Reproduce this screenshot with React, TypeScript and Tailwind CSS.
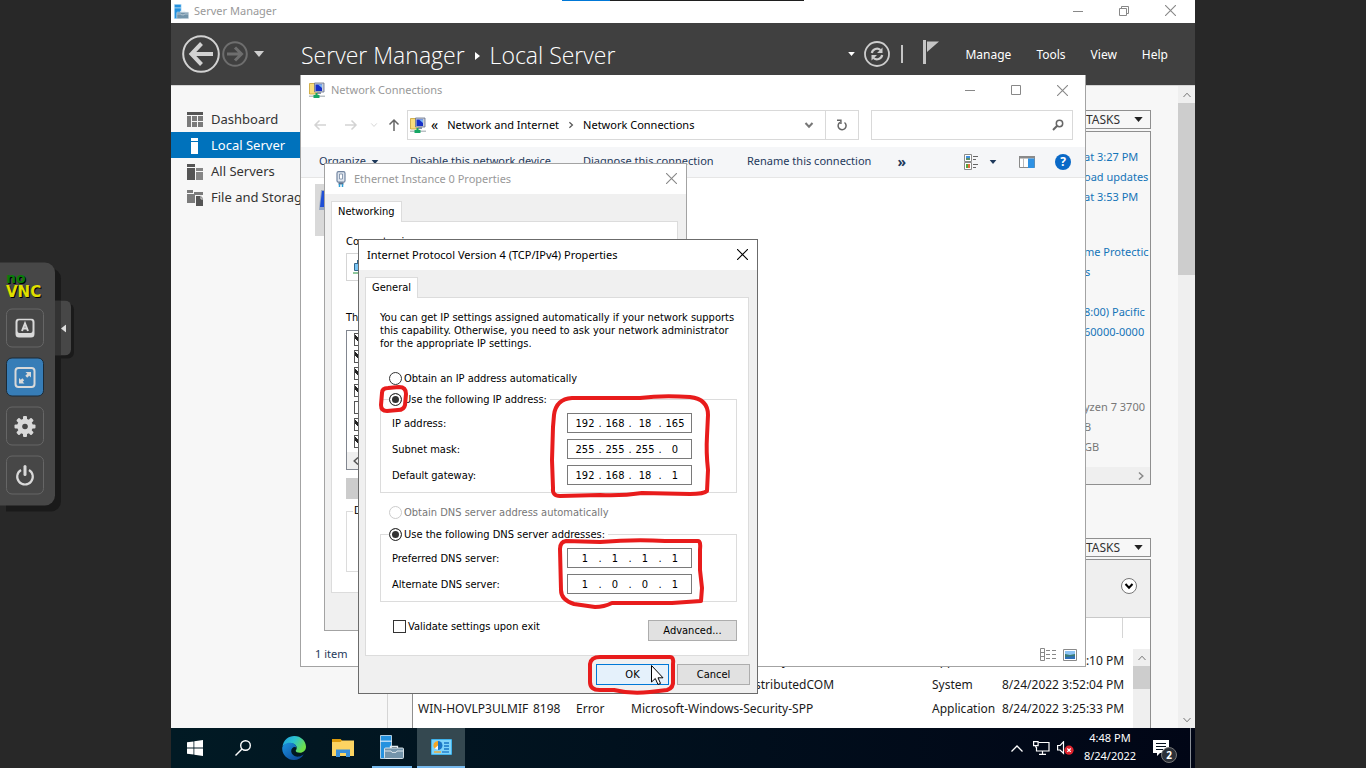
import type { ReactNode } from "react";

const segoe = "font-['Noto_Sans','Open_Sans',sans-serif]";
const tahoma = "font-['DejaVu_Sans_Condensed','DejaVu_Sans',sans-serif]";

/* ---------- small drawings ---------- */

function CaretDown({ className }: { className: string }) {
  return (
    <svg viewBox="0 0 10 6" className={className} aria-hidden="true">
      <path d="M0 0h10L5 6z" fill="currentColor" />
    </svg>
  );
}

function Chevron({ d, className }: { d: string; className: string }) {
  return (
    <svg viewBox="0 0 10 10" className={className} fill="none" stroke="currentColor" aria-hidden="true">
      <path d={d} />
    </svg>
  );
}

const UP = "M1.5 7L5 3.2L8.5 7";
const DOWN = "M1.5 3L5 6.8L8.5 3";
const LEFT = "M7 1.5L3.2 5L7 8.5";
const RIGHT = "M3 1.5L6.8 5L3 8.5";

function CloseIcon() {
  return (
    <svg viewBox="0 0 10 10" className="size-[11px]" stroke="currentColor" fill="none" aria-hidden="true">
      <path d="M0 0l10 10M10 0L0 10" />
    </svg>
  );
}

function MinimizeIcon() {
  return (
    <svg viewBox="0 0 10 10" className="size-[10px]" stroke="currentColor" fill="none" aria-hidden="true">
      <path d="M0 5.5h10" />
    </svg>
  );
}

function MaximizeIcon() {
  return (
    <svg viewBox="0 0 10 10" className="size-[10px]" stroke="currentColor" fill="none" aria-hidden="true">
      <path d="M.5.5h9v9h-9z" />
    </svg>
  );
}

function RestoreIcon() {
  return (
    <svg viewBox="0 0 10 10" className="size-[10px]" stroke="currentColor" fill="none" aria-hidden="true">
      <path d="M.5 2.5h7v7h-7zM2.5 2.5v-2h7v7h-2" />
    </svg>
  );
}

function ToolboxServer({ className }: { className: string }) {
  return (
    <svg viewBox="0 0 24 24" className={className} aria-hidden="true">
      <path d="M.5.5h11v23H.5z" fill="#2492df" stroke="#d7ecfa" strokeWidth=".8" />
      <path d="M0 6.2h12" stroke="#d7ecfa" strokeWidth="1.2" />
      <path d="M10.5 13.5v-2h7v2" fill="none" stroke="#e4edf2" strokeWidth="1.3" />
      <rect x="4.5" y="13" width="19" height="10.5" rx="1" fill="#7394aa" stroke="#e4edf2" strokeWidth=".9" />
      <path d="M5 16h6l1 1.4h4l1-1.4h6" fill="none" stroke="#e4edf2" strokeWidth=".9" />
    </svg>
  );
}

function NetworkFolder() {
  return (
    <svg viewBox="0 0 16 16" className="size-4 shrink-0" aria-hidden="true">
      <path d="M.5 1.5h5l1 1h3v9.500h-9z" fill="#f9dc7c" stroke="#c7a02f" strokeWidth=".8" />
      <path d="M5.500 1h9.500v9H5.500z" fill="#c9ced9" stroke="#667089" strokeWidth=".8" />
      <path d="M6.500 2.500h6.500v6.500H6.500z" fill="#1730c8" />
      <path d="M9 2.500h4v3.500z" fill="#7cb6f5" />
      <path d="M8 10h4v2H8z" fill="#8b93a5" />
      <path d="M0 13.500h16v1.500H0z" fill="#b9c0c4" />
      <path d="M4.500 13h6v3h-6z" fill="#16a765" />
      <path d="M6.500 11h2v3h-2z" fill="#16a765" />
    </svg>
  );
}

function DashboardIcon() {
  return (
    <svg viewBox="0 0 16 16" className="size-4" aria-hidden="true">
      <path d="M0 0h16v3H0z" fill="#555" />
      <path d="M0 4h4v11H0zM5 4h5v5H5zM11 4h5v5h-5zM5 10h5v5H5zM11 10h5v5h-5z" fill="#7b7b7b" />
    </svg>
  );
}

function LocalServerIcon() {
  return (
    <svg viewBox="0 0 16 16" className="size-4" aria-hidden="true">
      <path d="M4 0h7v3H4zM4 4h7v12H4z" fill="#fff" />
    </svg>
  );
}

function AllServersIcon() {
  return (
    <svg viewBox="0 0 16 16" className="size-4" aria-hidden="true">
      <path d="M0 0h8v3H0zM0 4h8v12H0z" fill="#555" />
      <path d="M9 4h7v3H9zM9 8h7v8H9z" fill="#868686" />
    </svg>
  );
}

function FileStorageIcon() {
  return (
    <svg viewBox="0 0 16 16" className="size-4" aria-hidden="true">
      <path d="M0 0h6v3H0zM0 4h8v9H0zM7 2h9v3H7z" fill="#7b7b7b" />
      <path d="M9 6h5l2 2.500V16H9z" fill="#555" />
      <path d="M14 5v4h2" fill="none" stroke="#ddd" />
    </svg>
  );
}

/* ---------- shared pieces ---------- */

function CaptionButton({ label, children }: { label: string; children: ReactNode }) {
  return (
    <button type="button" aria-label={label} className="flex w-[46px] items-center justify-center self-stretch">
      {children}
    </button>
  );
}

function MenuButton({ children }: { children: ReactNode }) {
  return (
    <button type="button" className="whitespace-nowrap">
      {children}
    </button>
  );
}

/* ---------- noVNC control bar ---------- */

function VncButton({ label, active, children }: { label: string; active?: boolean; children: ReactNode }) {
  const tone = active ? "border-[#1b2b38] bg-[#377db7]" : "border-[#666] bg-[#474747]";
  return (
    <button
      type="button"
      aria-label={label}
      className={`flex h-[39px] w-[38px] items-center justify-center rounded-md border text-[#d9d9d9] ${tone}`}
    >
      {children}
    </button>
  );
}

function VncBar() {
  return (
    <aside className="absolute top-1/2 left-0 z-10 flex -translate-y-1/2 items-start">
      <div className="flex flex-col gap-[10px] rounded-r-[10px] bg-[#474747] pt-2 pr-[11px] pb-[11px] pl-1.5 shadow-[6px_6px_0_#1a1a1a]">
        <div className="flex h-7 flex-col font-['DejaVu_Sans',sans-serif] font-bold [text-shadow:1px_1px_0_#000]">
          <span className="text-sm leading-[14px] text-[#0a7a0a]">no</span>
          <span className="text-[15px] leading-[14px] text-[#e0e000]">VNC</span>
        </div>
        <VncButton label="Show extra keys">
          <svg viewBox="0 0 20 20" className="size-5" aria-hidden="true">
            <path
              fillRule="evenodd"
              d="M4 0h12a3.500 3.500 0 0 1 3.500 3.500v12A3.500 3.500 0 0 1 16 19H4A3.500 3.500 0 0 1 .5 15.500v-12A3.500 3.500 0 0 1 4 0zm.5 1.800A2 2 0 0 0 2.500 4v8.500a2 2 0 0 0 2 2h11a2 2 0 0 0 2-2V4a2 2 0 0 0-2-2.200z"
              fill="currentColor"
            />
            <path d="M7 12.500l3-7.500l3 7.500M8 10h4" fill="none" stroke="currentColor" strokeWidth="2" />
          </svg>
        </VncButton>
        <VncButton label="Full screen" active>
          <svg viewBox="0 0 22 22" className="size-[22px]" aria-hidden="true">
            <rect x="1.500" y="1.500" width="19" height="19" rx="3" fill="none" stroke="currentColor" strokeWidth="2" />
            <path d="M11.500 5.500H17V11l-1.800-1.800l-2 2l-1.900-1.900l2-2zM10.500 17H5v-5.500l1.800 1.800l1.500-1.500l1.900 1.900l-1.500 1.500z" fill="currentColor" />
          </svg>
        </VncButton>
        <VncButton label="Settings">
          <svg viewBox="-11 -11 22 22" className="size-[22px]" aria-hidden="true">
            <g fill="currentColor">
              {[0, 45, 90, 135].map((a) => (
                <rect key={a} x="-2" y="-10.500" width="4" height="21" rx="1" transform={`rotate(${a})`} />
              ))}
              <circle r="7.800" />
            </g>
            <circle r="2.800" fill="#474747" />
          </svg>
        </VncButton>
        <VncButton label="Disconnect">
          <svg viewBox="0 0 22 22" className="size-[22px]" fill="none" stroke="currentColor" aria-hidden="true">
            <path d="M7 5.500a7.800 7.800 0 1 0 8 0" strokeWidth="2.200" />
            <path d="M11 2v8" strokeWidth="3" strokeLinecap="round" />
          </svg>
        </VncButton>
      </div>
      <button
        type="button"
        aria-label="Hide control bar"
        className="mt-[38px] flex h-[55px] w-4 items-center justify-center rounded-r-md bg-[#474747] shadow-[3px_3px_0_#1a1a1a] [background-image:linear-gradient(90deg,#333_0_6px,transparent_6px)]"
      >
        <svg viewBox="0 0 5 8" className="h-2 w-[5px]" aria-hidden="true">
          <path d="M5 0v8L0 4z" fill="#ddd" />
        </svg>
      </button>
    </aside>
  );
}

/* ---------- Server Manager ---------- */

const NAV: { label: string; icon: ReactNode; selected?: boolean }[] = [
  { label: "Dashboard", icon: <DashboardIcon /> },
  { label: "Local Server", icon: <LocalServerIcon />, selected: true },
  { label: "All Servers", icon: <AllServersIcon /> },
  { label: "File and Storage Services", icon: <FileStorageIcon /> },
];

const EVENTS = [
  ["", "", "", "Microsoft-Windows-Security-SPP", "Application", "8/24/2022 3:52:10 PM"],
  ["", "", "", "Microsoft-Windows-DistributedCOM", "System", "8/24/2022 3:52:04 PM"],
  ["WIN-HOVLP3ULMIF", "8198", "Error", "Microsoft-Windows-Security-SPP", "Application", "8/24/2022 3:25:33 PM"],
];

function TasksButton() {
  return (
    <button
      type="button"
      className="flex h-[19px] w-20 items-center justify-between self-end border border-[#8f8f8f] pr-[7px] pl-3.5 text-xs text-[#333]"
    >
      TASKS
      <CaretDown className="h-[5px] w-[9px] text-[#222]" />
    </button>
  );
}

function PropertiesTile() {
  return (
    <section className="flex h-[354px] flex-col items-end overflow-hidden border border-[#8f8f8f]">
      <div className="flex w-[66px] flex-1 flex-col pt-[15px] text-[11px] leading-5 whitespace-nowrap text-[#1474b8]">
        <a href="#installed">at 3:27 PM</a>
        <a href="#updates">oad updates</a>
        <a href="#checked">at 3:53 PM</a>
        <a href="#protection" className="mt-[35px]">
          me Protectic
        </a>
        <a href="#settings" className="pl-px">s</a>
        <a href="#zone" className="mt-5">
          8:00) Pacific
        </a>
        <a href="#product">60000-0000</a>
        <p className="mt-[55px] text-[#777]">yzen 7 3700</p>
        <p className="text-[#777]">B</p>
        <p className="text-[#777]">GB</p>
      </div>
      <div className="flex h-[17px] items-center justify-end self-stretch bg-[#efefef] pr-1">
        <Chevron d={RIGHT} className="size-[10px] text-[#888] [stroke-width:1.5]" />
      </div>
    </section>
  );
}

function EventsTile() {
  return (
    <section className="flex flex-1 flex-col border border-b-0 border-[#8f8f8f] bg-white">
      <div className="flex h-[58px] items-center justify-end border-b border-[#c9c9c9] bg-[#efefef] pr-[13px] pb-[5px]">
        <button
          type="button"
          aria-label="Expand filter"
          className="flex size-4 items-center justify-center rounded-full border border-[#777] bg-white"
        >
          <Chevron d={DOWN} className="size-[10px] text-black [stroke-width:2]" />
        </button>
      </div>
      <div className="flex h-[31px] justify-end pr-[27px]">
        <span className="h-5 border-l border-[#d5d5d5]" />
      </div>
      <div className="flex flex-1 overflow-hidden">
        <table className="w-full flex-1 table-fixed self-start text-left text-xs whitespace-nowrap text-[#1a1a1a]">
          <colgroup>
            <col className="w-[120px]" />
            <col className="w-[43px]" />
            <col className="w-[55px]" />
            <col />
            <col className="w-[70px]" />
            <col className="w-[131px]" />
          </colgroup>
          <tbody>
            {EVENTS.map((row, i) => (
              <tr key={i} className="h-6">
                {row.map((cell, j) => (
                  <td key={j} className="p-0 first:pl-[5px]">
                    {cell}
                  </td>
                ))}
              </tr>
            ))}
          </tbody>
        </table>
        <div className="flex w-[17px] flex-col items-center bg-[#efefef]">
          <div className="flex h-[17px] items-center">
            <Chevron d={UP} className="size-[10px] text-[#777]" />
          </div>
          <div className="h-[23px] w-full bg-[#cdcdcd]" />
        </div>
      </div>
    </section>
  );
}

function ServerManager() {
  return (
    <div className="flex min-h-0 flex-1 flex-col bg-white">
      <div className="flex h-[23px] shrink-0 items-center text-[#888]">
        <ToolboxServer className="ml-[3px] size-[15px]" />
        <h1 className="ml-[5px] flex-1 text-[11px] text-[#999]">Server Manager</h1>
        <div className="flex self-stretch pr-0.5 pb-0.5">
          <CaptionButton label="Minimize">
            <MinimizeIcon />
          </CaptionButton>
          <CaptionButton label="Restore">
            <RestoreIcon />
          </CaptionButton>
          <CaptionButton label="Close">
            <CloseIcon />
          </CaptionButton>
        </div>
      </div>

      <header className="flex h-[62px] shrink-0 items-center bg-[#404040] text-white">
        <button type="button" aria-label="Back" className="ml-[11px]">
          <svg viewBox="0 0 38 38" className="size-[38px]" fill="none" stroke="#d2d2d2" aria-hidden="true">
            <circle cx="19" cy="19" r="17.800" strokeWidth="2" />
            <path d="M31 19H9" strokeWidth="4" />
            <path d="M19.500 8.500L9.500 19l10 10.500" strokeWidth="4" />
          </svg>
        </button>
        <button type="button" aria-label="Forward" className="ml-0.5">
          <svg viewBox="0 0 26 26" className="size-[26px]" fill="none" stroke="#6e6e6e" aria-hidden="true">
            <circle cx="13" cy="13" r="11.800" strokeWidth="2" />
            <path d="M5 13h14M13 6.500l6.500 6.500l-6.500 6.500" strokeWidth="3" />
          </svg>
        </button>
        <CaretDown className="ml-1.5 h-1.5 w-[10px] text-[#cfcfcf]" />
        <nav className="ml-[37px] flex flex-1 items-center pt-[3px] font-['Open_Sans',sans-serif] text-[23px] font-light whitespace-nowrap">
          <span>Server Manager</span>
          <svg viewBox="0 0 5 8" className="mx-2.5 h-2 w-[5px]" aria-hidden="true">
            <path d="M0 0v8l5-4z" fill="#fff" />
          </svg>
          <span>Local Server</span>
        </nav>
        <CaretDown className="h-1 w-[7px] text-white" />
        <button type="button" aria-label="Refresh" className="ml-[9px]">
          <svg viewBox="0 0 26 26" className="size-[26px]" fill="none" stroke="#cdcdcd" aria-hidden="true">
            <circle cx="13" cy="13" r="12" strokeWidth="1.800" />
            <path d="M7.800 12A5.400 5.400 0 0 1 16.500 9M18.200 14A5.400 5.400 0 0 1 9.500 17" strokeWidth="2.200" />
            <path d="M18.500 6.500v5.500H13zM7.500 19.500V14H13z" fill="#cdcdcd" stroke="none" />
          </svg>
        </button>
        <span className="ml-[11px] h-[18px] border-l-2 border-[#c5c5c5]" />
        <button type="button" aria-label="Notifications" className="ml-5 pb-1">
          <svg viewBox="0 0 16 24" className="h-6 w-4" aria-hidden="true">
            <path d="M0 0h3v24H0z" fill="#c5c5c5" />
            <path d="M4 1.500h12L4 12z" fill="#c5c5c5" />
          </svg>
        </button>
        <nav className="ml-[26px] flex gap-[25px] pt-0.5 pr-[27px] text-xs">
          <MenuButton>Manage</MenuButton>
          <MenuButton>Tools</MenuButton>
          <MenuButton>View</MenuButton>
          <MenuButton>Help</MenuButton>
        </nav>
      </header>

      <div className="flex min-h-0 flex-1 border-t border-[#d5d5d5] bg-[#f7f7f7]">
        <nav className="w-[217px] shrink-0 border-r border-[#d5d5d5] pt-5 text-[13px] text-[#333]">
          {NAV.map((item) => (
            <a
              key={item.label}
              href="#nav"
              className={`flex h-[26px] items-center gap-2 pt-0.5 pl-4 whitespace-nowrap ${
                item.selected ? "bg-[#0072bc] text-white" : ""
              }`}
            >
              {item.icon}
              {item.label}
            </a>
          ))}
        </nav>
        <main className="flex min-w-0 flex-1 flex-col overflow-hidden pt-6 pr-[27px] pl-6">
          <TasksButton />
          <div className="mt-[2px] flex flex-col">
            <PropertiesTile />
          </div>
          <div className="mt-[53px] flex min-h-0 flex-1 flex-col gap-0.5">
            <TasksButton />
            <EventsTile />
          </div>
        </main>
        <div className="flex w-[17px] shrink-0 flex-col items-center bg-[#efefef]">
          <div className="flex h-[17px] items-center">
            <Chevron d={UP} className="size-[10px] text-[#777]" />
          </div>
          <div className="h-[172px] w-full bg-[#cdcdcd]" />
          <div className="flex flex-1 items-end pb-[3px]">
            <Chevron d={DOWN} className="size-[10px] text-[#777]" />
          </div>
        </div>
      </div>
    </div>
  );
}

/* ---------- Network Connections window ---------- */

function NavArrow({ label, d, className }: { label: string; d: string; className: string }) {
  return (
    <button type="button" aria-label={label} className={className}>
      <svg viewBox="0 0 14 14" className="size-3.5" fill="none" stroke="currentColor" strokeWidth="1.500" aria-hidden="true">
        <path d={d} />
      </svg>
    </button>
  );
}

function NetworkConnections() {
  return (
    <section
      aria-label="Network Connections"
      className="absolute top-[75px] left-[129px] flex h-[592px] w-[786px] flex-col border border-t-0 border-[#a3a3a3] bg-white"
    >
      <div className="flex h-[30px] items-center text-[#888]">
        <span className="ml-2">
          <NetworkFolder />
        </span>
        <h2 className="ml-1.5 flex-1 text-[11px] text-[#999]">Network Connections</h2>
        <CaptionButton label="Minimize">
          <MinimizeIcon />
        </CaptionButton>
        <CaptionButton label="Maximize">
          <MaximizeIcon />
        </CaptionButton>
        <CaptionButton label="Close">
          <CloseIcon />
        </CaptionButton>
      </div>

      <div className="flex h-[42px] items-center pb-0.5 text-[11px] text-black">
        <NavArrow label="Back" d="M13 7H2M6.500 2.500L2 7l4.500 4.500" className="ml-3 text-[#d3d3d3]" />
        <NavArrow label="Forward" d="M1 7h11M7.500 2.500L12 7l-4.500 4.500" className="ml-[17px] text-[#d3d3d3]" />
        <Chevron d={DOWN} className="ml-3 size-2 text-[#ccc]" />
        <NavArrow label="Up" d="M7 13V2M2.500 6.500L7 2l4.500 4.500" className="ml-[9px] text-[#666] [stroke-width:2]" />
        <div className="ml-1.5 flex h-[30px] w-[452px] items-center border border-[#d9d9d9] whitespace-nowrap">
          <span className="ml-0.5">
            <NetworkFolder />
          </span>
          <span className="ml-[5px] text-sm leading-4">«</span>
          <button type="button" className="ml-[9px]">Network and Internet</button>
          <Chevron d={RIGHT} className="mx-2 size-2 text-[#555] [stroke-width:1.5]" />
          <button type="button">Network Connections</button>
          <button type="button" aria-label="Recent locations" className="ml-auto px-[11px]">
            <Chevron d={DOWN} className="size-[10px] text-[#777] [stroke-width:2]" />
          </button>
          <button
            type="button"
            aria-label="Refresh"
            className="flex w-[33px] items-center justify-center self-stretch border-l border-[#d9d9d9]"
          >
            <svg viewBox="0 0 12 12" className="size-3" fill="none" stroke="#666" strokeWidth="1.500" aria-hidden="true">
              <path d="M8.500 3.500A4 4 0 1 1 4 3.300" />
              <path d="M1 1.200H4.900V5" />
            </svg>
          </button>
        </div>
        <div className="ml-3 flex h-[30px] w-[202px] items-center border border-[#d9d9d9] pr-2">
          <input aria-label="Search Network Connections" className="min-w-0 flex-1 outline-none" />
          <svg viewBox="0 0 12 12" className="size-3" fill="none" stroke="#666" aria-hidden="true">
            <circle cx="7.500" cy="4.500" r="3.200" strokeWidth="1.500" />
            <path d="M5.200 6.800L1 11" strokeWidth="2" />
          </svg>
        </div>
      </div>

      <div className="flex h-[31px] items-center border-b border-[#e6e6e6] bg-[#f5f6f8] pb-px pl-[18px] text-[11px] text-[#1e395b]">
        <div className="w-[91px]">
          <button type="button" className="flex items-center gap-[5px]">
            Organize
            <CaretDown className="h-1 w-[8px]" />
          </button>
        </div>
        <div className="w-[173px]">
          <MenuButton>Disable this network device</MenuButton>
        </div>
        <div className="w-[164px]">
          <MenuButton>Diagnose this connection</MenuButton>
        </div>
        <div className="flex flex-1 items-center">
          <MenuButton>Rename this connection</MenuButton>
          <button type="button" aria-label="More commands" className="ml-[26px] text-sm leading-4 font-bold">
            »
          </button>
        </div>
        <button type="button" aria-label="Change view" className="flex items-center gap-2.5">
          <svg viewBox="0 0 15 16" className="h-4 w-[15px]" fill="none" stroke="#8a8a8a" aria-hidden="true">
            <path d="M.5.5h7v7h-7zM.5 8.500h7v7h-7z" fill="#fff" />
            <path d="M2 2h4v2H2z" fill="#3f8ede" stroke="none" />
            <path d="M2 4h4v2H2z" fill="#5b8f6a" stroke="none" />
            <path d="M2 10h2v4H2z" fill="#55a63a" stroke="none" />
            <path d="M4 10h2v4H4z" fill="#e36d3c" stroke="none" />
            <path d="M9 2.500h5M9 5.500h3M9 10.500h5M9 13.500h3" stroke="#666" />
          </svg>
          <CaretDown className="h-1 w-[8px]" />
        </button>
        <button type="button" aria-label="Preview pane" className="ml-[22px]">
          <svg viewBox="0 0 16 12" className="h-3 w-4" aria-hidden="true">
            <path d="M.5.5h15v11H.5z" fill="#fff" stroke="#8a8a8a" />
            <path d="M0 0h16v2.500H0z" fill="#8a8a8a" />
            <path d="M4.500 2v9" stroke="#bbb" />
            <path d="M9 2.500h6.500V12H9z" fill="#2f92e4" />
          </svg>
        </button>
        <button
          type="button"
          aria-label="Help"
          className="mr-[14px] ml-5 flex size-4 items-center justify-center rounded-full bg-[#0a69c7] text-xs leading-none font-bold text-white"
        >
          ?
        </button>
      </div>

      <div className="flex-1 pt-1.5 pl-[14px]">
        <div className="h-[52px] w-[240px] bg-[#d9d9d9] pt-1.5 pl-1">
          <svg viewBox="0 0 30 20" className="h-5 w-[30px]" aria-hidden="true">
            <path d="M2 0h28v20H0z" fill="#98a8c4" />
            <path d="M3 1h26v16H1z" fill="#1f4fd6" />
          </svg>
        </div>
      </div>

      <div className="flex h-[23px] items-center pr-2 pl-[14px] text-[11px] text-[#1e395b]">
        <span className="flex-1">1 item</span>
        <button type="button" aria-label="Details view">
          <svg viewBox="0 0 16 13" className="h-[13px] w-4" fill="none" stroke="#888" aria-hidden="true">
            <path d="M.5.5h4v12h-4zM.5 4.500h4M.5 8.500h4M6 2.500h4M12 2.500h4M6 6.500h4M12 6.500h4M6 10.500h4M12 10.500h4" />
          </svg>
        </button>
        <button type="button" aria-label="Large icons view" className="ml-[7px]">
          <svg viewBox="0 0 14 12" className="h-3 w-3.5" aria-hidden="true">
            <path d="M.5.5h13v11H.5z" fill="#fff" stroke="#8a8a8a" />
            <path d="M2 2h10v4H2z" fill="#8cc3f4" />
            <path d="M2 5l5 1l5-1v5H2z" fill="#3c7c73" />
            <path d="M2 8l10-1v3H2z" fill="#2d6fb8" />
          </svg>
        </button>
      </div>
    </section>
  );
}

/* ---------- Ethernet properties window ---------- */

function EthernetProperties() {
  const items = [true, true, true, true, false, true, true];
  return (
    <section
      aria-label="Ethernet Instance 0 Properties"
      className="absolute top-[163px] left-[153px] flex h-[468px] w-[363px] flex-col border border-[#a3a3a3] bg-[#f0f0f0]"
    >
      <div className="flex h-[30px] items-center bg-white text-[#888]">
        <svg viewBox="0 0 10 16" className="ml-[11px] h-4 w-[10px]" aria-hidden="true">
          <rect x="1" y=".7" width="8" height="10.500" rx="1.500" fill="#dfe6ef" stroke="#7285a0" strokeWidth="1.200" />
          <path d="M3.500 3h3v5h-3z" fill="#fff" stroke="#7285a0" strokeWidth=".8" />
          <path d="M2.500 11.500h5v2h-5z" fill="#5c708c" />
          <path d="M3.500 13v3M6.500 13v3" stroke="#2c9fd8" strokeWidth="1.500" />
        </svg>
        <h2 className="ml-2 flex-1 text-[11px] text-[#999]">Ethernet Instance 0 Properties</h2>
        <button type="button" aria-label="Close" className="flex w-[30px] items-center justify-center self-stretch pb-0.5">
          <CloseIcon />
        </button>
      </div>
      <div className={`flex flex-col px-1.5 pt-[7px] pr-2 text-[11px] text-black ${tahoma}`}>
        <button type="button" className="z-10 -mb-px h-[21px] self-start border border-b-0 border-[#dcdcdc] bg-white px-1.5">
          Networking
        </button>
        <div className="flex h-[372px] flex-col border border-[#dcdcdc] bg-white px-3.5 pt-3">
          <p className="leading-4">Connect using:</p>
          <div className="mt-[3px] flex h-7 items-center border border-[#d5d5d5] pl-1.5">
            <svg viewBox="0 0 16 16" className="size-4" aria-hidden="true">
              <path d="M1.500 4.500h12v7h-12z" fill="#79c5f5" stroke="#35688c" />
              <path d="M4 1h8v4H4z" fill="#35688c" />
              <path d="M0 13h16v2H0z" fill="#8fc79b" />
            </svg>
          </div>
          <p className="mt-[29px] leading-4">This connection uses the following items:</p>
          <div className="mt-1 flex h-[140px] shrink-0 flex-col border border-[#828790]">
            <ul className="flex-1 pl-[7px]">
              {items.map((on, i) => (
                <li key={i} className="flex h-[17px] items-center">
                  <input
                    type="checkbox"
                    defaultChecked={on}
                    aria-label={`Item ${i + 1}`}
                    className="size-[13px] appearance-none border border-[#555] bg-white checked:bg-[linear-gradient(45deg,transparent_30%,#222_30%_48%,transparent_48%)]"
                  />
                </li>
              ))}
            </ul>
            <div className="flex h-[17px] items-center bg-[#efefef] pl-1">
              <Chevron d={LEFT} className="size-[10px] text-[#555] [stroke-width:1.5]" />
            </div>
          </div>
          <button type="button" disabled aria-label="Install" className="mt-2 h-[21px] w-[94px] shrink-0 bg-[#ccc]" />
          <fieldset className="mt-[4px] h-[69px] shrink-0 border border-[#dcdcdc]">
            <legend className="ml-1.5 px-px leading-4">Description</legend>
          </fieldset>
        </div>
      </div>
    </section>
  );
}

/* ---------- IPv4 properties dialog ---------- */

const radioClass =
  "size-[13px] shrink-0 appearance-none rounded-full border border-[#333] bg-white checked:bg-[#333] checked:shadow-[inset_0_0_0_2px_white] disabled:border-[#ccc]";

function Radio({ name, label, checked, disabled }: { name: string; label: string; checked?: boolean; disabled?: boolean }) {
  return (
    <label className={`flex h-4 items-center gap-0.5 whitespace-nowrap ${disabled ? "text-[#777]" : ""}`}>
      <input type="radio" name={name} defaultChecked={checked} disabled={disabled} className={radioClass} />
      {label}
    </label>
  );
}

function AddressRow({ label, octets }: { label: string; octets: string[] }) {
  return (
    <div role="group" aria-label={label} className="flex h-5 items-center justify-between">
      <span>{label}</span>
      <div className="flex h-5 w-[125px] items-center border border-[#7a7a7a] bg-white pl-[5px]">
        {octets.map((octet, i) => (
          <div key={i} className="flex items-center">
            {i > 0 && <span className="w-1.5 text-center">.</span>}
            <input aria-label={`${label} part ${i + 1}`} defaultValue={octet} className="w-6 text-center outline-none" />
          </div>
        ))}
      </div>
    </div>
  );
}

function DialogButton({ children, className }: { children: ReactNode; className: string }) {
  return (
    <button type="button" className={`h-[21px] border ${className}`}>
      {children}
    </button>
  );
}

function Ipv4Properties() {
  return (
    <section
      role="dialog"
      aria-label="Internet Protocol Version 4 (TCP/IPv4) Properties"
      className="absolute top-[239px] left-[187px] flex w-[400px] flex-col border border-[#6b6b6b] bg-[#f0f0f0] text-black"
    >
      <div className="flex h-[30px] items-center bg-white pl-2">
        <h2 className="flex-1 text-[11px]">Internet Protocol Version 4 (TCP/IPv4) Properties</h2>
        <button type="button" aria-label="Close" className="flex w-[30px] items-center justify-center self-stretch pb-0.5">
          <CloseIcon />
        </button>
      </div>
      <div className={`flex flex-col pt-[7px] pr-[7px] pl-1.5 text-[11px] leading-[13px] ${tahoma}`}>
        <button type="button" className="z-10 -mb-px h-[21px] self-start border border-b-0 border-[#dcdcdc] bg-white px-1.5 pb-px">
          General
        </button>
        <div className="mr-px flex flex-col border border-[#dcdcdc] bg-white pt-[13px] pr-[11px] pb-3.5 pl-3.5">
          <p className="whitespace-nowrap">
            You can get IP settings assigned automatically if your network supports
            <br />
            this capability. Otherwise, you need to ask your network administrator
            <br />
            for the appropriate IP settings.
          </p>
          <div className="mt-5 pl-[9px]">
            <Radio name="ip" label="Obtain an IP address automatically" />
          </div>
          <fieldset className="mt-[5px] flex flex-col gap-1.5 border border-[#dcdcdc] pt-1.5 pr-11 pb-[7px] pl-[11px]">
            <legend className="-ml-[3px] pr-[3px]">
              <Radio name="ip" label="Use the following IP address:" checked />
            </legend>
            <AddressRow label="IP address:" octets={["192", "168", "18", "165"]} />
            <AddressRow label="Subnet mask:" octets={["255", "255", "255", "0"]} />
            <AddressRow label="Default gateway:" octets={["192", "168", "18", "1"]} />
          </fieldset>
          <div className="mt-[11px] pl-[9px]">
            <Radio name="dns" label="Obtain DNS server address automatically" disabled />
          </div>
          <fieldset className="mt-1.5 flex flex-col gap-1.5 border border-[#dcdcdc] pt-1.5 pr-11 pb-[7px] pl-[11px]">
            <legend className="-ml-[3px] pr-[3px]">
              <Radio name="dns" label="Use the following DNS server addresses:" checked />
            </legend>
            <AddressRow label="Preferred DNS server:" octets={["1", "1", "1", "1"]} />
            <AddressRow label="Alternate DNS server:" octets={["1", "0", "0", "1"]} />
          </fieldset>
          <div className="mt-4 flex items-start justify-between pl-[13px]">
            <label className="flex h-4 items-center gap-0.5">
              <input type="checkbox" className="size-[13px] appearance-none border border-[#333] bg-white" />
              Validate settings upon exit
            </label>
            <DialogButton className="mt-0.5 w-[89px] border-[#adadad] bg-[#e1e1e1]">Advanced...</DialogButton>
          </div>
        </div>
        <div className="flex justify-end gap-2 py-2">
          <DialogButton className="w-[73px] border-[#0078d7] bg-[#e5f1fb]">OK</DialogButton>
          <DialogButton className="w-[73px] border-[#adadad] bg-[#e1e1e1]">Cancel</DialogButton>
        </div>
      </div>
    </section>
  );
}

/* Hand-drawn marks over the dialog, in dialog coordinates. */
function Annotations() {
  return (
    <svg
      viewBox="358 239 400 460"
      className="pointer-events-none absolute top-[239px] left-[187px] h-[460px] w-[400px] overflow-visible"
      fill="none"
      stroke="#e81c1c"
      strokeWidth="4"
      strokeLinejoin="round"
      aria-hidden="true"
    >
      <path d="M382 393Q382 388 388 388L399 387Q406 387 406 394L405 405Q404 410 398 410L387 411Q381 411 381 405Z" />
      <path d="M553 427L554 415Q556 399 572 398L640 398Q662 395 690 397Q708 399 708 415L707 436Q706 452 708 470L707 491Q704 494 690 494L642 493Q622 496 600 495L560 496Q552 496 553 488L552 460Z" />
      <path d="M560 549Q560 542 566 541L600 542Q635 539 665 541L698 541Q701 541 700 550L700 570L702 588L701 601L672 603L612 603Q604 607 595 607L574 604Q561 600 561 590Z" />
      <path d="M590 664Q591 657 600 657L670 657Q674 657 673 664L673 680Q674 688 667 690L650 692Q630 694 614 690L600 690Q590 690 590 682Z" />
      <path
        d="M651.500 665.500V682L655.300 678.500L658 684.500L660.500 683.400L658 677.800H663Z"
        fill="#fff"
        stroke="#000"
        strokeWidth="1"
        strokeLinejoin="miter"
      />
    </svg>
  );
}

/* ---------- Taskbar ---------- */

function TaskButton({ label, className, children }: { label: string; className?: string; children: ReactNode }) {
  return (
    <button type="button" aria-label={label} className={`flex items-center justify-center ${className ?? "w-12"}`}>
      {children}
    </button>
  );
}

function Taskbar() {
  return (
    <footer className="flex h-10 shrink-0 bg-gradient-to-r from-[#011a24] to-[#010616] text-white">
      <TaskButton label="Start">
        <svg viewBox="0 0 16 16" className="size-4" aria-hidden="true">
          <path d="M0 2.300l6.500-.9v6.200H0zM7.300 1.300L16 0v7.600H7.300zM0 8.400h6.500v6.200L0 13.700zM7.300 8.400H16V16l-8.700-1.300z" fill="#fff" />
        </svg>
      </TaskButton>
      <TaskButton label="Search">
        <svg viewBox="0 0 16 16" className="size-4" fill="none" stroke="#fff" strokeWidth="1.400" aria-hidden="true">
          <circle cx="10.500" cy="5.500" r="4.800" />
          <path d="M7 9L.5 15.500" />
        </svg>
      </TaskButton>
      <TaskButton label="Microsoft Edge" className="ml-[3px] w-12">
        <svg viewBox="0 0 24 24" className="size-6" aria-hidden="true">
          <defs>
            <linearGradient id="edgeTop" x1="0" y1="0" x2="1" y2=".5">
              <stop offset="0" stopColor="#1e9de0" />
              <stop offset=".5" stopColor="#2cc3d0" />
              <stop offset="1" stopColor="#6fe048" />
            </linearGradient>
            <linearGradient id="edgeBottom" x1="0" y1="0" x2="1" y2="1">
              <stop offset="0" stopColor="#1b93e0" />
              <stop offset="1" stopColor="#0c3f8f" />
            </linearGradient>
          </defs>
          <path d="M.5 10.500C1.500 4 6.500 0 12.300 0C19 0 24 5 24 10.800c0 3.500-2.700 6-6 6c-2.800 0-4.300-1-4.300-2c0-.7 1-1.200 1-3c0-2.300-2.200-4.300-5.500-4.300C5 7.500 1.500 8.500.5 10.500z" fill="url(#edgeTop)" />
          <path d="M.2 13C0 9 4 6.500 8.500 6.800c3.400.2 6 2.300 6 5C12.500 9.800 9 12 9.200 15.300c.3 3.500 4 6 8 5.200c2-.4 3.300-1.300 4.600-2.300C19.800 22 16 24 12 24C5.500 24 .4 19 .2 13z" fill="url(#edgeBottom)" />
        </svg>
      </TaskButton>
      <TaskButton label="File Explorer" className="ml-px w-12">
        <svg viewBox="0 0 22 18" className="h-[18px] w-[22px]" aria-hidden="true">
          <path d="M0 0h8l2 2H0z" fill="#e0a315" />
          <path d="M0 1.500h22V17H0z" fill="#fcd462" />
          <path d="M0 0h8.500l1.500 1.500l-1.500 1.500H0z" fill="#dd9b0c" />
          <path d="M4 18v-7.500h14V18h-4v-4H8v4z" fill="#3a8fd8" />
        </svg>
      </TaskButton>
      <TaskButton label="Server Manager" className="mr-1 ml-[5px] w-10 border-b-2 border-[#76b9ed]">
        <ToolboxServer className="size-6" />
      </TaskButton>
      <TaskButton label="Network Connections" className="ml-px w-12 border-b-2 border-[#76b9ed] bg-[#344850]">
        <svg viewBox="0 0 21 16" className="h-4 w-[21px]" aria-hidden="true">
          <rect width="21" height="16" rx="1" fill="#3fb2ea" />
          <rect x="1" y="1" width="19" height="14" fill="#7fd4fa" />
          <circle cx="7" cy="6.500" r="4" fill="#f7f7f7" />
          <path d="M7 6.500V2a4.500 4.500 0 0 1 0 9z" fill="#1975c5" />
          <path d="M7 6.500L3.500 9.500A4.500 4.500 0 0 1 7 2z" fill="#f5a623" />
          <path d="M13 4h5M13 7h5M13 10h5" stroke="#1975c5" strokeWidth="1.300" />
          <path d="M3 13h7" stroke="#f5a623" strokeWidth="1.300" />
          <path d="M11 13h7" stroke="#1975c5" strokeWidth="1.300" />
        </svg>
      </TaskButton>
      <div className="ml-auto flex items-center">
        <button type="button" aria-label="Show hidden icons">
          <svg viewBox="0 0 12 7" className="h-[7px] w-3" fill="none" stroke="#fff" strokeWidth="1.300" aria-hidden="true">
            <path d="M.5 6.500L6 1l5.500 5.500" />
          </svg>
        </button>
        <button type="button" aria-label="Network" className="ml-2.5">
          <svg viewBox="0 0 17 14" className="h-3.5 w-[17px]" fill="none" stroke="#fff" strokeWidth="1.200" aria-hidden="true">
            <path d="M5.500 1.500H16v8.500H3.500V6" />
            <path d="M.6.6h4.500v4H.6zM2.800 4.600v2M9.500 10v3M6 13.300h7" />
          </svg>
        </button>
        <button type="button" aria-label="Volume muted" className="ml-[7px]">
          <svg viewBox="0 0 17 14" className="h-3.5 w-[17px]" aria-hidden="true">
            <path d="M.6 4.500h2.500L6.500.8v11.500L3.100 9H.6z" fill="none" stroke="#fff" strokeWidth="1.200" />
            <circle cx="12" cy="9.200" r="4.600" fill="#e0242e" />
            <path d="M10.300 7.500l3.400 3.400M13.700 7.500l-3.400 3.400" stroke="#fff" strokeWidth="1.200" />
          </svg>
        </button>
        <div className="ml-[9px] flex w-[54px] flex-col items-center pb-0.5 text-[11px] leading-[18px]">
          <span>4:48 PM</span>
          <span>8/24/2022</span>
        </div>
        <button type="button" aria-label="Notifications" className="relative ml-4 size-[22px]">
          <svg viewBox="0 0 16 16" className="size-4" aria-hidden="true">
            <path d="M0 0h16v13H7l-3 3v-3H0z" fill="#fff" />
            <path d="M3 3.500h10M3 6.500h10M3 9.500h7" stroke="#04101c" />
          </svg>
          <span className="absolute -right-0.5 -bottom-1 flex size-4 items-center justify-center rounded-full border border-[#777] bg-[#2b3038] text-[10px] font-bold">
            2
          </span>
        </button>
        <span className="mr-1 ml-[15px] self-stretch border-l border-[#8a8f96]" />
      </div>
    </footer>
  );
}

export default function App() {
  return (
    <div className={`relative flex min-h-screen justify-center overflow-hidden bg-[#282828] ${segoe}`}>
      <VncBar />
      <div className="relative flex aspect-[4/3] h-screen flex-col overflow-hidden">
        <ServerManager />
        <NetworkConnections />
        <EthernetProperties />
        <Ipv4Properties />
        <Annotations />
        <Taskbar />
      </div>
      <div className="absolute top-0 left-1/2 flex h-px w-[242px] -translate-x-1/2 bg-[#1f1f1f]">
        <div className="w-12 bg-[#0078d7]" />
      </div>
    </div>
  );
}
